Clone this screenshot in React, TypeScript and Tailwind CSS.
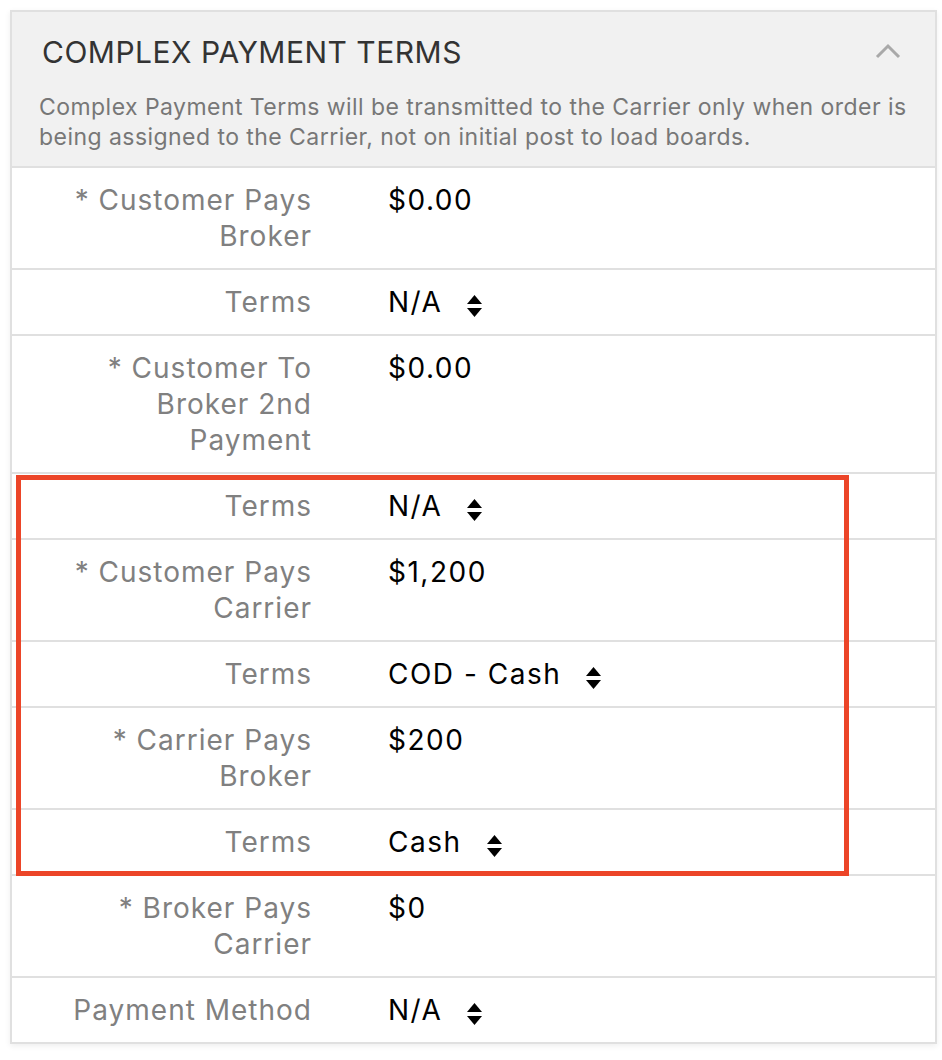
import React from "react";

const font = { fontFamily: "Inter, 'Noto Sans', sans-serif" };

function SortIcon() {
  return (
    <svg width="17" height="24" viewBox="0 0 17 24" className="ml-[24px] mt-[10px] shrink-0" aria-hidden>
      <path d="M8.5 1 L16 10 H1 Z" fill="#000" />
      <path d="M1 14 H16 L8.5 23 Z" fill="#000" />
    </svg>
  );
}

type RowProps = { label: React.ReactNode; value: string; select?: boolean; last?: boolean };

function Row({ label, value, select, last }: RowProps) {
  return (
    <div className={`flex py-[14px] leading-[36px] text-[28px] ${last ? "" : "border-b-2 border-[#e0e0e0]"}`}>
      <div className="w-[300px] shrink-0 text-right text-[#808080] tracking-[1px]">{label}</div>
      <div className="pl-[76px] flex items-start text-black">
        <span className="tracking-[1.5px]">{value}</span>
        {select && <SortIcon />}
      </div>
    </div>
  );
}

export default function App() {
  return (
    <div className="min-h-[1060px] bg-white pt-[10px] pl-[10px]" style={font}>
      <div className="w-[927px] border-2 border-[#e0e0e0] bg-white shadow-[0_2px_6px_rgba(0,0,0,0.07)]">
        <div className="bg-[#f1f1f1] border-b-2 border-[#e0e0e0] pl-[27px] pr-[20px] pt-[22px] pb-[14px]">
          <div className="flex items-start justify-between">
            <div className="pl-[3px] text-[30px] leading-[36px] tracking-[0.5px] text-[#333]">COMPLEX PAYMENT TERMS</div>
            <svg width="30" height="20" viewBox="0 0 30 20" className="mt-[8px] mr-[12px]" aria-hidden>
              <polyline points="4,15 15,4 26,15" fill="none" stroke="#a9a9a9" strokeWidth="3" />
            </svg>
          </div>
          <div className="mt-[22px] text-[23px] leading-[30px] tracking-[0.45px] text-[#777] whitespace-nowrap">
            Complex Payment Terms will be transmitted to the Carrier only when order is
            <br />
            being assigned to the Carrier, not on initial post to load boards.
          </div>
        </div>
        <Row label={<>* Customer Pays<br />Broker</>} value="$0.00" />
        <Row label="Terms" value="N/A" select />
        <Row label={<>* Customer To<br />Broker 2nd<br />Payment</>} value="$0.00" />
        <div className="relative">
          <Row label="Terms" value="N/A" select />
          <Row label={<>* Customer Pays<br />Carrier</>} value="$1,200" />
          <Row label="Terms" value="COD - Cash" select />
          <Row label={<>* Carrier Pays<br />Broker</>} value="$200" />
          <Row label="Terms" value="Cash" select />
          <div className="absolute left-[4px] top-[1px] w-[833px] h-[401px] border-[5px] border-[#ec4528] pointer-events-none" />
        </div>
        <Row label={<>* Broker Pays<br />Carrier</>} value="$0" />
        <Row label="Payment Method" value="N/A" select last />
      </div>
    </div>
  );
}
